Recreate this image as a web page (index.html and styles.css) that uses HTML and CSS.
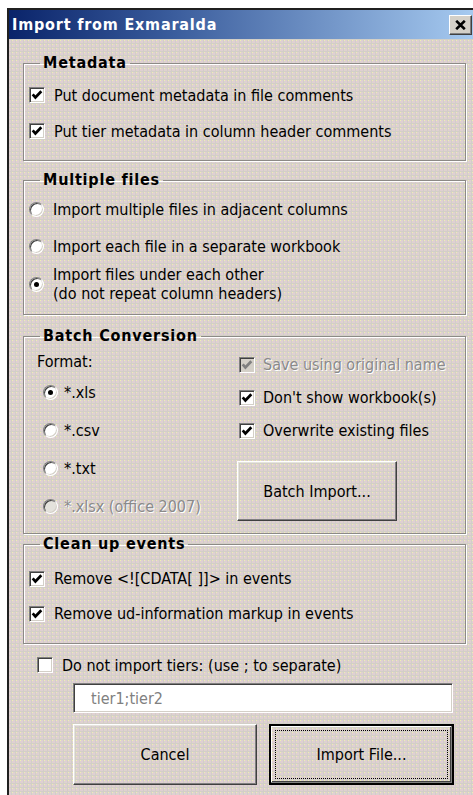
FILE: index.html
```html
<!DOCTYPE html>
<html lang="en">
<head>
<meta charset="utf-8">
<title>Import from Exmaralda</title>
<link rel="stylesheet" href="styles.css">
</head>
<body>
<div class="window">
  <div class="titlebar">
    <span class="title">Import from Exmaralda</span>
    <button class="close" type="button" aria-label="Close">
      <svg width="11" height="10" viewBox="0 0 11 10"><path d="M1.2 0.8 L9.8 9.2 M9.8 0.8 L1.2 9.2" stroke="#000" stroke-width="2.6"/></svg>
    </button>
  </div>

  <div class="client">
    <fieldset class="group group-meta">
      <legend>Metadata</legend>
      <div class="opt opt-36">
        <span class="box"><svg viewBox="0 0 13 13"><polyline points="2.5,6 5,8.8 10.5,3" /></svg></span>
        <span>Put document metadata in file comments</span>
      </div>
      <div class="opt opt-36">
        <span class="box"><svg viewBox="0 0 13 13"><polyline points="2.5,6 5,8.8 10.5,3" /></svg></span>
        <span>Put tier metadata in column header comments</span>
      </div>
    </fieldset>

    <fieldset class="group group-files">
      <legend>Multiple files</legend>
      <div class="opt opt-37">
        <span class="radio"></span>
        <span>Import multiple files in adjacent columns</span>
      </div>
      <div class="opt opt-37">
        <span class="radio"></span>
        <span>Import each file in a separate workbook</span>
      </div>
      <div class="opt opt-multi">
        <span class="radio on"></span>
        <span>Import files under each other<br>(do not repeat column headers)</span>
      </div>
    </fieldset>

    <fieldset class="group group-batch">
      <legend>Batch Conversion</legend>
      <div class="batch">
        <div class="formats">
          <div class="format-label">Format:</div>
          <div class="opt opt-38 opt-tight">
            <span class="radio on"></span><span>*.xls</span>
          </div>
          <div class="opt opt-38 opt-tight">
            <span class="radio"></span><span>*.csv</span>
          </div>
          <div class="opt opt-38 opt-tight">
            <span class="radio"></span><span>*.txt</span>
          </div>
          <div class="opt opt-38 opt-tight disabled">
            <span class="radio"></span><span>*.xlsx (office 2007)</span>
          </div>
        </div>
        <div class="batch-side">
          <div class="opt opt-33 disabled">
            <span class="box"><svg viewBox="0 0 13 13"><polyline points="2.5,6 5,8.8 10.5,3" /></svg></span>
            <span>Save using original name</span>
          </div>
          <div class="opt opt-33">
            <span class="box"><svg viewBox="0 0 13 13"><polyline points="2.5,6 5,8.8 10.5,3" /></svg></span>
            <span>Don't show workbook(s)</span>
          </div>
          <div class="opt opt-33">
            <span class="box"><svg viewBox="0 0 13 13"><polyline points="2.5,6 5,8.8 10.5,3" /></svg></span>
            <span>Overwrite existing files</span>
          </div>
          <button class="btn btn-batch" type="button">Batch Import...</button>
        </div>
      </div>
    </fieldset>

    <fieldset class="group group-clean">
      <legend>Clean up events</legend>
      <div class="opt opt-35">
        <span class="box"><svg viewBox="0 0 13 13"><polyline points="2.5,6 5,8.8 10.5,3" /></svg></span>
        <span>Remove &lt;![CDATA[ ]]&gt; in events</span>
      </div>
      <div class="opt opt-35">
        <span class="box"><svg viewBox="0 0 13 13"><polyline points="2.5,6 5,8.8 10.5,3" /></svg></span>
        <span>Remove ud-information markup in events</span>
      </div>
    </fieldset>

    <div class="opt tiers">
      <span class="box"></span>
      <span>Do not import tiers: (use ; to separate)</span>
    </div>
    <div class="field" role="textbox" aria-readonly="true"><span class="field-text">tier1;tier2</span></div>

    <div class="actions">
      <button class="btn btn-cancel" type="button">Cancel</button>
      <button class="btn btn-default" type="button"><span class="focus">Import File...</span></button>
    </div>
  </div>
</div>
</body>
</html>
```

FILE: styles.css
```css
* {
  box-sizing: border-box;
}

html,
body {
  margin: 0;
  height: 100%;
}

body {
  background: #fff;
  color: #000;
  font-family: "DejaVu Sans Condensed", "DejaVu Sans", sans-serif;
  font-size: 16px;
  line-height: 17px;
  overflow: hidden;
}

/* dithered 3D-face surface shared by the window and its buttons */
.window,
.btn {
  background-color: #d2cfc7;
  background-image:
    conic-gradient(from 270deg at 1px 1px, #efefb2 0 90deg, transparent 0),
    conic-gradient(from 270deg at 3px 3px, #dfd0d2 0 90deg, transparent 0);
  background-size: 4px 4px;
  background-attachment: fixed;
}

.window {
  margin: 8px 0 0 7px;
  height: calc(100% - 8px);
  border-top: 2px solid #202020;
  border-left: 2px solid #202020;
  display: flex;
  flex-direction: column;
}

/* caption */
.titlebar {
  height: 29px;
  flex: none;
  display: flex;
  align-items: center;
  justify-content: space-between;
  padding: 0 1px 0 3px;
  background: linear-gradient(90deg, #0a246a 0%, #3a5c9c 35%, #a6caf0 100%);
}

.title {
  color: #fff;
  font-weight: bold;
  letter-spacing: 0.8px;
}

.close {
  width: 23px;
  height: 20px;
  padding: 0;
  display: grid;
  place-items: center;
  background: #d4d0c8;
  border: 1px solid;
  border-color: #fff #404040 #404040 #fff;
  box-shadow: inset -1px -1px #808080;
}

/* dialog body */
.client {
  padding: 0 7px 0 14px;
}

.group {
  margin: 0;
  padding: 0;
  min-width: 0;
  border: 1px solid #8c8a86;
  box-shadow: inset 1px 1px #fff, 1px 1px #fff;
}

.group legend {
  margin-left: 16px;
  padding: 0 3px;
  font-weight: bold;
  letter-spacing: 0.8px;
  line-height: 18px;
}

.group > .opt {
  padding-left: 5px;
}

.group-meta {
  margin-top: 15px;
  padding: 5px 0 11px;
}

.group-files {
  margin-top: 10px;
  padding: 2px 0 11px;
}

.group-batch {
  margin-top: 12px;
  padding: 0 0 8px;
}

.group-clean {
  margin-top: 1px;
  padding: 8px 0 12px;
}

/* option rows */
.opt {
  display: flex;
  align-items: center;
  gap: 9px;
}

.opt-tight {
  gap: 6px;
}

.opt-33 { height: 33px; }
.opt-35 { height: 35px; }
.opt-36 { height: 36px; }
.opt-37 { height: 37px; }
.opt-38 { height: 38px; }

.opt-multi {
  height: 38px;
  line-height: 19px;
}

.disabled {
  color: #8a8a8a;
  text-shadow: 1px 1px #fff;
}

/* sunken check box */
.box {
  flex: none;
  width: 16px;
  height: 16px;
  display: grid;
  place-items: center;
  background: #fff;
  border: 1px solid;
  border-color: #808080 #fff #fff #808080;
  box-shadow: inset 1px 1px #404040, inset -1px -1px #d4d0c8;
}

.box svg {
  width: 14px;
  height: 14px;
  fill: none;
  stroke: #000;
  stroke-width: 2.5;
}

.disabled .box {
  background: #d4d0c8;
}

.disabled .box svg {
  stroke: #808080;
}

/* round option button */
.radio {
  flex: none;
  width: 15px;
  height: 15px;
  border-radius: 50%;
  display: grid;
  place-items: center;
  background: #fff;
  border: 1px solid;
  border-color: #808080 #fff #fff #808080;
  box-shadow: inset 1px 1px #404040, inset -1px -1px #d4d0c8;
}

.radio.on::after {
  content: "";
  width: 5px;
  height: 5px;
  border-radius: 50%;
  background: #000;
}

.disabled .radio {
  background: #e4e2dc;
}

/* batch conversion columns */
.batch {
  display: flex;
}

.formats {
  width: 213px;
  padding: 4px 0 0 13px;
}

.format-label {
  height: 24px;
  display: flex;
  align-items: center;
}

.formats .opt {
  padding-left: 6px;
}

.batch-side {
  padding-top: 3px;
}

.batch-side .opt {
  padding-left: 2px;
  gap: 8px;
}

/* push buttons */
.btn {
  font: inherit;
  color: #000;
  padding: 0;
  border: 1px solid;
  border-color: #fff #404040 #404040 #fff;
  box-shadow: inset -1px -1px #808080, inset 1px 1px #e6e4de;
}

.btn-batch {
  margin-top: 14px;
  width: 160px;
  height: 60px;
}

.tiers {
  height: 26px;
  margin-top: 8px;
  padding-left: 14px;
}

.field {
  display: flex;
  align-items: center;
  margin: 5px 0 0 50px;
  width: 380px;
  height: 30px;
  color: #808080;
  background: #fff;
  border: 1px solid;
  border-color: #808080 #fff #fff #808080;
  box-shadow: inset 1px 1px #404040, inset -1px -1px #d4d0c8;
}

.field-text {
  margin-left: 17px;
}

.actions {
  display: flex;
  gap: 12px;
  margin: 11px 0 0 50px;
}

.btn-cancel {
  width: 184px;
  height: 61px;
}

.btn-default {
  width: 185px;
  height: 61px;
  border: 2px solid #000;
  box-shadow: inset -1px -1px #808080, inset 1px 1px #fff, inset -2px -2px #404040;
  padding: 4px;
}

.focus {
  display: flex;
  align-items: center;
  justify-content: center;
  height: 100%;
  border: 1px dotted #000;
}
```
